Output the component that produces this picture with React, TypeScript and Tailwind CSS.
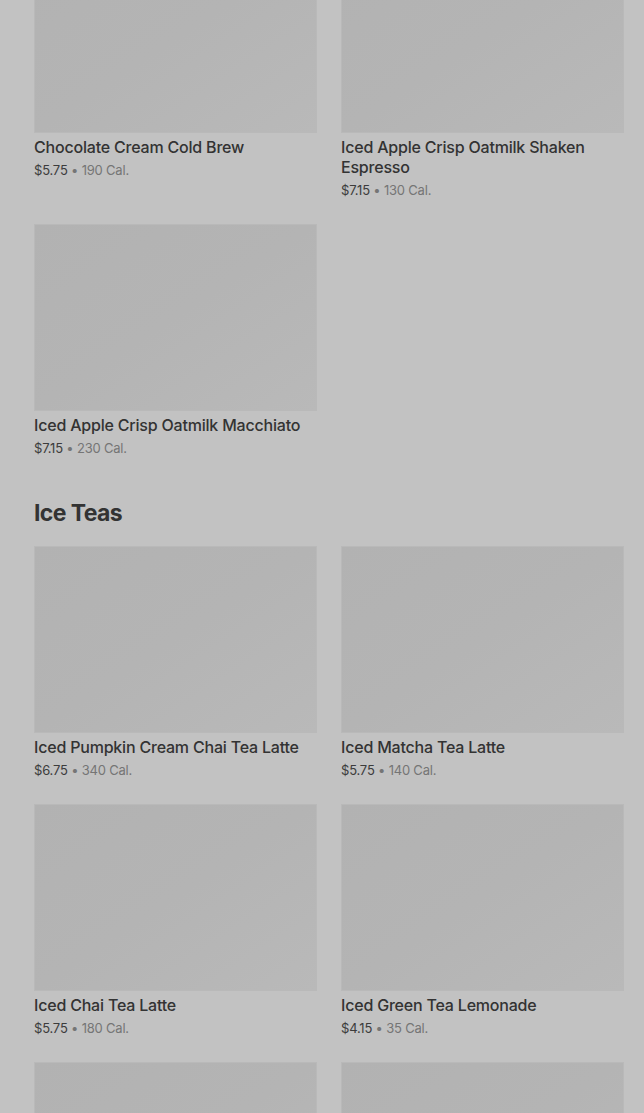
import React from "react"

type Item = { name: string; price: string; cal: string }

const coldBrews: Item[] = [
  { name: "Chocolate Cream Cold Brew", price: "$5.75", cal: "190 Cal." },
  { name: "Iced Apple Crisp Oatmilk Shaken Espresso", price: "$7.15", cal: "130 Cal." },
  { name: "Iced Apple Crisp Oatmilk Macchiato", price: "$7.15", cal: "230 Cal." },
]

const iceTeas: Item[] = [
  { name: "Iced Pumpkin Cream Chai Tea Latte", price: "$6.75", cal: "340 Cal." },
  { name: "Iced Matcha Tea Latte", price: "$5.75", cal: "140 Cal." },
  { name: "Iced Chai Tea Latte", price: "$5.75", cal: "180 Cal." },
  { name: "Iced Green Tea Lemonade", price: "$4.15", cal: "35 Cal." },
  { name: "Iced Black Tea", price: "$3.95", cal: "0 Cal." },
  { name: "Iced Peach Green Tea", price: "$4.45", cal: "60 Cal." },
]

function Card({ item }: { item: Item }) {
  return (
    <div className="flex flex-col">
      <div className="h-[187px] w-full border border-[#b9b9b9] bg-gradient-to-br from-[#b2b2b2] via-[#b4b4b4] to-[#b9b9b9]" />
      <p className="mt-1 text-[16px] leading-[20px] font-medium tracking-[-0.2px] text-[#333333]">{item.name}</p>
      <p className="mt-1 text-[13px] leading-[18px] tracking-[-0.2px] text-[#3c3c3c]">
        {item.price}
        <span className="text-[#757575]"> • {item.cal}</span>
      </p>
    </div>
  )
}

function Grid({ items }: { items: Item[] }) {
  return (
    <div className="grid grid-cols-2 gap-x-6 gap-y-[25px]">
      {items.map((it) => (
        <Card key={it.name} item={it} />
      ))}
    </div>
  )
}

export default function App() {
  return (
    <div
      className="h-[1113px] overflow-hidden bg-[#c2c2c2]"
      style={{ fontFamily: "Inter, 'Noto Sans', sans-serif" }}
    >
      <div className="-mt-[54px] pl-[34px] pr-5">
        <Grid items={coldBrews} />
        <h2 className="mt-10 mb-[17px] text-[23px] leading-[32px] font-bold tracking-[-0.6px] text-[#333333]">
          Ice Teas
        </h2>
        <Grid items={iceTeas} />
      </div>
    </div>
  )
}
